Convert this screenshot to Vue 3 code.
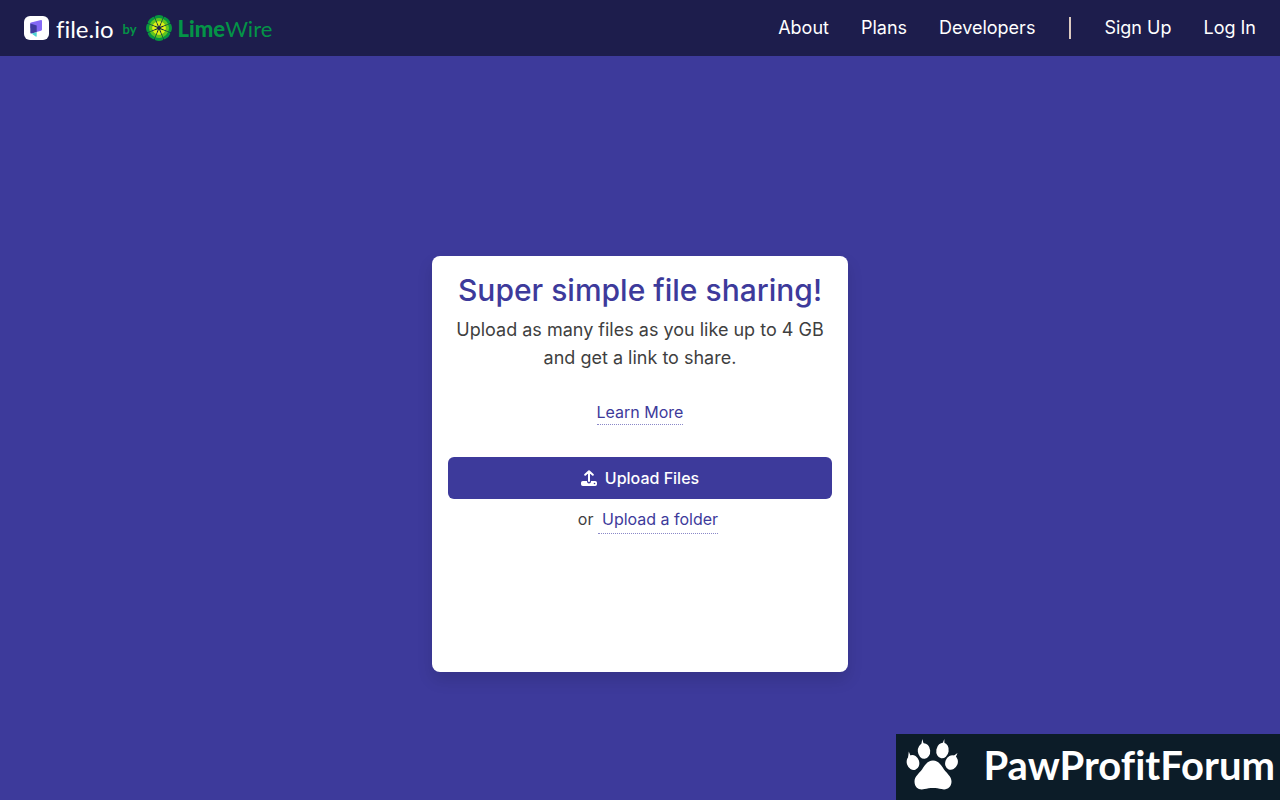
<script setup>
const petals = Array.from({ length: 8 }, (_, i) => i * 45)
const mainLinks = ['About', 'Plans', 'Developers']
const accountLinks = ['Sign Up', 'Log In']
</script>

<template>
  <div class="page">
    <header class="topbar">
      <a class="brand" href="#" aria-label="file.io by LimeWire">
        <svg class="file-mark" viewBox="0 0 25 24" aria-hidden="true">
          <rect width="25" height="24" rx="6" fill="#fff" />
          <path d="M6.300 7.500Q6.300 6.800 7 6.600L17 4Q18 3.800 18 5v8.500Q18 14.500 17 14.800L12.500 16 6.300 12z" fill="#8469f5" />
          <path d="M6.300 7.500 12.700 9.500v6.700L7.300 17.500Q6.300 17.700 6.300 16.500z" fill="#403b9e" />
          <path d="M7.500 17.500 12.700 16.200V20q0 1.300-1 .5z" fill="#50d3d5" />
        </svg>
        <span class="file-name">file.io</span>
        <span class="by">by</span>
        <svg class="lime" viewBox="-13 -13 26 26" aria-hidden="true">
          <g v-for="a in petals" :key="a" :transform="`rotate(${a})`">
            <path d="M0-2-4.300-10.800Q-4.500-11.800-3.500-12.200 0-13.700 3.500-12.200 4.500-11.800 4.300-10.800z" fill="#07963f" />
            <path d="M0-2-3.500-9.300Q0-10.700 3.500-9.300z" fill="#62c51d" />
            <path d="M0-1.600-2.200-6.400Q0-7.300 2.200-6.400z" fill="#e0ed17" />
          </g>
        </svg>
        <span class="lime-name"><b>Lime</b>Wire</span>
      </a>
      <nav class="nav">
        <a v-for="l in mainLinks" :key="l" href="#">{{ l }}</a>
        <span class="divider"></span>
        <a v-for="l in accountLinks" :key="l" href="#">{{ l }}</a>
      </nav>
    </header>

    <main class="main">
      <section class="card">
        <h1>Super simple file sharing!</h1>
        <p class="lead">Upload as many files as you like up to 4 GB and get a link to share.</p>
        <a class="more" href="#">Learn More</a>
        <button class="upload" type="button">
          <svg viewBox="0 0 16 16" aria-hidden="true">
            <path d="M8 11V1.5M4.2 4.8 8 1.2l3.8 3.6" fill="none" stroke="#fff" stroke-width="2" stroke-linecap="round" stroke-linejoin="round" />
            <path d="M1.8 11H6v.4a2 2 0 0 0 4 0V11h4.2A1.8 1.8 0 0 1 16 12.8v1.4a1.8 1.8 0 0 1-1.8 1.8H1.8A1.8 1.8 0 0 1 0 14.200v-1.400A1.800 1.800 0 0 1 1.800 11z" fill="#fff" />
            <circle cx="13.500" cy="13.500" r=".8" fill="#3d3a9b" />
          </svg>
          Upload Files
        </button>
        <div class="folder">or <a href="#">Upload a folder</a></div>
      </section>
    </main>

    <aside class="watermark">
      <svg viewBox="0 0 52 52" aria-hidden="true">
        <g fill="#fff">
          <path d="M27 21.500c5 0 8 4 11 9 3 4 7.500 7 7.500 12 0 6-5 9-10 7.500-5-1.500-12-1.500-17 0-5 1.500-10-1-10-7.500 0-5 4.500-8 7.500-12 3-5 6-9 11-9z" />
          <ellipse cx="7" cy="23.500" rx="6.200" ry="7.500" transform="rotate(-18 7 23.500)" />
          <ellipse cx="18" cy="12" rx="6.200" ry="7.800" transform="rotate(-5 18 12)" />
          <ellipse cx="36.500" cy="11.500" rx="6.200" ry="7.800" transform="rotate(10 36.500 11.500)" />
          <ellipse cx="45.500" cy="23.500" rx="6.200" ry="7.500" transform="rotate(22 45.500 23.500)" />
          <path d="M2 19 2.800 12.500 5 18zM15 7 16.300 0 18 6zM36 6 38.300 0 38.500 6zM46 18 51.500 14 49 20z" />
        </g>
      </svg>
      <span>PawProfitForum</span>
    </aside>
  </div>
</template>

<style>
body {
  margin: 0;
}
</style>

<style scoped>
.page {
  position: relative;
  box-sizing: border-box;
  min-height: 100vh;
  background: #3d3a9b;
  font-family: Inter, "Liberation Sans", sans-serif;
  font-size: 16px;
  line-height: 24px;
  color: #3f3f3f;
}
.topbar {
  display: flex;
  align-items: center;
  justify-content: space-between;
  height: 56px;
  padding: 0 24px;
  background: #1d1d4c;
}
a {
  color: inherit;
  text-decoration: none;
}
.brand {
  display: flex;
  align-items: center;
  font-family: Lato, sans-serif;
  color: #049347;
}
.file-mark {
  width: 25px;
  height: 24px;
}
.file-name {
  margin-left: 7px;
  padding-top: 2px;
  font-size: 24px;
  font-variant-ligatures: none;
  color: #fff;
}
.by {
  margin-left: 9px;
  padding-top: 2px;
  font-size: 13px;
  font-weight: 700;
}
.lime {
  width: 26px;
  height: 26px;
  margin: 0 6px 0 9px;
}
.lime-name {
  padding-top: 2px;
  font-size: 22px;
}
.lime-name b {
  font-weight: 900;
}
.nav {
  display: flex;
  align-items: center;
  gap: 32px;
  font-size: 18px;
  line-height: 28px;
  color: #fff;
}
.divider {
  width: 2px;
  height: 22px;
  margin: 0 1px 0 2px;
  background: #dccac0;
}
.main {
  display: flex;
  justify-content: center;
  padding-top: 200px;
}
.card {
  display: flex;
  flex-direction: column;
  align-items: center;
  box-sizing: border-box;
  width: 416px;
  min-height: 416px;
  padding: 16px;
  border-radius: 8px;
  background: #fff;
  box-shadow: 0 8px 16px rgba(0, 0, 0, 0.12);
  text-align: center;
}
h1 {
  margin: 0;
  font-size: 30px;
  line-height: 36px;
  font-weight: 500;
  color: #3d3a9b;
}
.lead {
  margin: 8px 0 28px;
  font-size: 18px;
  line-height: 28px;
}
.more {
  border-bottom: 1px dotted #8a88c8;
  color: #3d3a9b;
}
.upload {
  display: flex;
  align-items: center;
  justify-content: center;
  gap: 8px;
  width: 100%;
  height: 42px;
  margin-top: 32px;
  padding: 0;
  border: 0;
  border-radius: 6px;
  background: #3d3a9b;
  color: #fff;
  font: 500 16px/24px Inter, sans-serif;
}
.upload svg {
  width: 16px;
  height: 16px;
}
.folder {
  margin-top: 8px;
  padding-left: 16px;
}
.folder a {
  display: inline-block;
  padding: 0 0 2px 4px;
  border-bottom: 1px dotted #8a88c8;
  color: #3d3a9b;
}
.watermark {
  position: absolute;
  right: 0;
  bottom: 0;
  display: flex;
  align-items: center;
  justify-content: space-between;
  box-sizing: border-box;
  width: 384px;
  height: 66px;
  padding: 0 5px 4px 10px;
  background: #0c1c28;
  color: #fff;
  font: 700 40px/48px Lato, sans-serif;
  font-variant-ligatures: none;
}
.watermark svg {
  width: 52px;
  height: 52px;
}
</style>
